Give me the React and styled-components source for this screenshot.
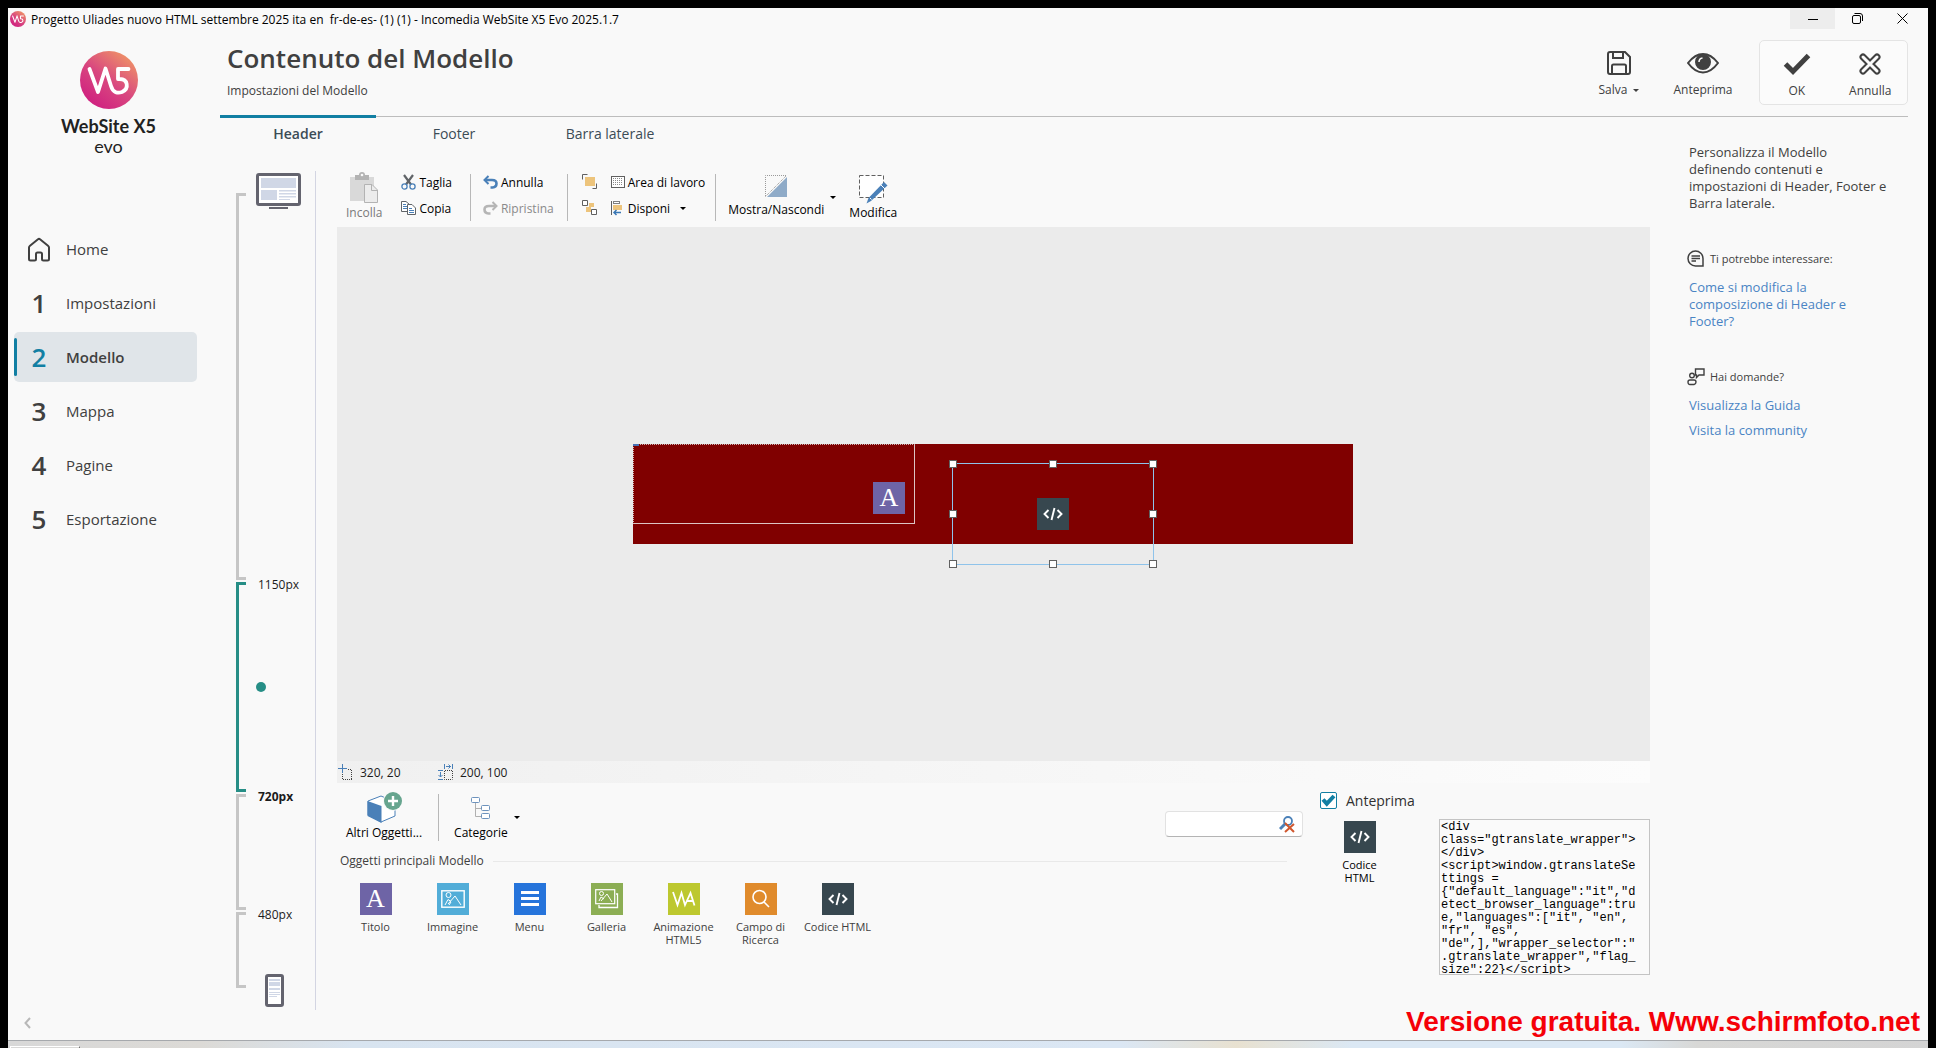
import React from 'react';
import styled, { createGlobalStyle, css } from 'styled-components';

const GlobalStyle = createGlobalStyle`
  *, *::before, *::after {
    box-sizing: border-box;
  }

  body {
    margin: 0;
    background: #000000;
    font-family: 'Open Sans', 'Noto Sans', sans-serif;
    font-size: 12px;
    color: #404040;
  }

  button, input, textarea {
    font: inherit;
    color: inherit;
  }

  button {
    border: 0;
    padding: 0;
    background: none;
    cursor: pointer;
  }

  svg {
    display: block;
    flex: none;
  }
`;

const Page = styled.div`
  min-height: 100vh;
  padding: 8px 8px 0;
  display: flex;
  flex-direction: column;
`;

const Window = styled.div`
  position: relative;
  flex: 1;
  display: flex;
  flex-direction: column;
  background: #f9f9f9;
`;

const TitleBar = styled.div`
  display: flex;
  align-items: center;
  height: 22px;
  padding-left: 2px;
  color: #000000;
`;

const WindowTitle = styled.span`
  flex: 1;
  margin-left: 5px;
  white-space: pre;
`;

const WindowButton = styled.button`
  display: flex;
  align-items: center;
  justify-content: center;
  width: 45px;
  height: 21px;
  background: ${({ $hover }) => ($hover ? '#ededed' : 'transparent')};
`;

const WindowButtons = styled.div`
  display: flex;
  align-self: flex-start;
  padding-right: 3px;
`;

const Body = styled.div`
  flex: 1;
  display: flex;
`;

const Sidebar = styled.aside`
  width: 212px;
  display: flex;
  flex-direction: column;
  padding: 21px 0 10px 6px;
`;

const Logo = styled.div`
  width: 189px;
  height: 173px;
  display: flex;
  flex-direction: column;
  align-items: center;
  color: #222222;
  font-family: Lato, sans-serif;
`;

const LogoName = styled.span`
  margin-top: 6px;
  font-size: 18px;
  line-height: 22px;
  font-weight: 700;
`;

const LogoEdition = styled.span`
  font-size: 18px;
  line-height: 18px;
`;

const Nav = styled.nav`
  display: flex;
  flex-direction: column;
  gap: 4px;
  width: 183px;
`;

const NavItem = styled.button`
  display: flex;
  align-items: center;
  height: 50px;
  border-radius: 5px;
  text-align: left;
  font-size: 15px;
  font-weight: ${({ $active }) => ($active ? 600 : 400)};
  background: ${({ $active }) => ($active ? '#e0e5e9' : 'transparent')};

  &::before {
    content: '';
    width: 3px;
    height: 38px;
    border-radius: 2px;
    background: ${({ $active }) => ($active ? '#127fa3' : 'transparent')};
  }
`;

const NavMark = styled.span`
  display: flex;
  justify-content: center;
  width: 44px;
  margin-right: 5px;
  font-size: 26px;
  font-weight: 600;
  color: ${({ $active }) => ($active ? '#127fa3' : '#404040')};
`;

const Collapse = styled.button`
  margin: auto 0 0 2px;
  width: 24px;
  height: 14px;
`;

const Content = styled.main`
  flex: 1;
  min-width: 0;
  display: flex;
  flex-direction: column;
  padding-right: 20px;
`;

const Header = styled.header`
  display: flex;
  align-items: flex-start;
  height: 87px;
  padding: 10px 0 0 7px;
  border-bottom: 1px solid #bdbdbd;
`;

const Headings = styled.div`
  flex: 1;
`;

const Heading = styled.h1`
  margin: 0;
  font-size: 26px;
  line-height: 36px;
  font-weight: 600;
`;

const SubHeading = styled.p`
  margin: 6px 0 0;
  font-size: 12px;
  line-height: 18px;
`;

const Actions = styled.div`
  display: flex;
  align-items: flex-start;
`;

const ActionGroup = styled.div`
  display: flex;
  width: 149px;
  height: 65px;
  margin-left: 14px;
  border: 1px solid #e4e4e4;
  border-radius: 5px;
  background: #fbfbfb;
`;

const Action = styled.button`
  display: flex;
  flex-direction: column;
  align-items: center;
  gap: 5px;
  flex: ${({ $grow }) => ($grow ? 1 : 'none')};
  width: 84px;
  height: 63px;
  padding-top: 10px;
  line-height: 18px;
`;

const Caption = styled.span`
  display: flex;
  align-items: center;
  gap: ${({ $gap }) => $gap || 6}px;
`;

const Tabs = styled.div`
  display: flex;
  margin-top: -2px;
`;

const Tab = styled.button`
  width: 156px;
  height: 29px;
  padding-top: 5px;
  border-top: 3px solid ${({ $active }) => ($active ? '#127fa3' : 'transparent')};
  font-size: 14px;
  line-height: 20px;
  font-weight: ${({ $active }) => ($active ? 600 : 400)};
  color: #3c4c56;
`;

const Workspace = styled.div`
  flex: 1;
  display: grid;
  grid-template-columns: 96px minmax(0, 1fr) 258px;
`;

const Rail = styled.section`
  display: flex;
  flex-direction: column;
  gap: 2px;
  margin: 27px 0 30px;
  padding: 22px 0 22px 16px;
  border-right: 1px solid #d3d5e2;
`;

const Segment = styled.div`
  flex: ${({ $size }) => $size} 1 0;
  display: flex;
  gap: 12px;

  &::before {
    content: '';
    width: 10px;
    border: 3px solid ${({ $active }) => ($active ? '#268e86' : '#c6c6c6')};
    border-right: 0;
  }
`;

const SegmentLabel = styled.div`
  display: flex;
  flex-direction: column;
  font-size: 12px;
  line-height: 18px;
  font-weight: ${({ $bold }) => ($bold ? 700 : 400)};
  color: #1c1c1c;

  span {
    margin: -6px 0 -12px;
  }
`;

const Marker = styled.i`
  margin: auto 0 auto -2px;
  width: 10px;
  height: 10px;
  border-radius: 5px;
  background: #268e86;
`;

const DesktopSlot = styled.div`
  margin: -20px 0 0 -2px;
`;

const PhoneSlot = styled.div`
  margin: auto 0 -19px 7px;
`;

const Editor = styled.section`
  display: flex;
  flex-direction: column;
  padding: 27px 0 0 21px;
`;

const Toolbar = styled.div`
  display: flex;
  align-items: flex-start;
  height: 56px;
  padding: 1px 0 0 9px;
  color: #000000;
`;

const Divider = styled.div`
  width: 1px;
  height: 47px;
  margin: 2px ${({ $after }) => $after}px 0 ${({ $before }) => $before}px;
  background: #b8b8b8;
`;

const BigButton = styled.button`
  display: flex;
  flex-direction: column;
  align-items: center;
  gap: ${({ $gap }) => $gap || 0}px;
  padding-top: ${({ $top }) => $top || 0}px;
  line-height: 18px;
  white-space: nowrap;

  &:disabled {
    color: #7a7a7a;
  }
`;

const ToolStack = styled.div`
  display: flex;
  flex-direction: column;
  gap: 8px;
  padding-top: 1px;
  margin-left: ${({ $left }) => $left || 0}px;
`;

const ToolButton = styled.button`
  display: flex;
  align-items: center;
  gap: 3px;
  height: 18px;
  white-space: nowrap;

  &:disabled {
    color: #8a8a8a;
  }
`;

const Drop = styled.button`
  padding: 6px;
  margin: 18px ${({ $after }) => $after || 0}px 0 0;
`;

const Triangle = styled.i`
  display: block;
  border: 3px solid transparent;
  border-top-color: ${({ $color }) => $color || '#000000'};
  border-bottom: 0;
`;

const Canvas = styled.div`
  flex: 1;
  display: flex;
  align-items: center;
  justify-content: center;
  padding-right: 1px;
  background: #ebebeb;
`;

const Stage = styled.div`
  position: relative;
  width: 720px;
  height: 100px;
  background: #800000;
`;

const TitleObject = styled.div`
  position: absolute;
  left: 0;
  top: 0;
  width: 282px;
  height: 80px;
  padding: 0 9px 9px 0;
  display: flex;
  align-items: flex-end;
  justify-content: flex-end;
  border: 1px dotted #c9b4b4;
  border-right: 1px solid #dcc4c4;
  border-bottom: 1px solid #dcc4c4;

  &::before {
    content: '';
    position: absolute;
    left: -1px;
    top: -1px;
    width: 6px;
    height: 2px;
    background: #4a72b4;
  }
`;

const SelectedObject = styled.div`
  position: absolute;
  left: 319px;
  top: 19px;
  width: 202px;
  height: 102px;
  display: flex;
  align-items: center;
  justify-content: center;
  border: 1px solid #8fc3ea;
`;

const Handle = styled.i`
  position: absolute;
  left: ${({ $x }) => $x}%;
  top: ${({ $y }) => $y}%;
  width: 8px;
  height: 8px;
  transform: translate(-50%, -50%);
  border: 1px solid #606060;
  background: #ffffff;
`;

const StatusBar = styled.div`
  display: flex;
  align-items: center;
  height: 22px;
  padding-left: 1px;
  color: #1c1c1c;
  background: linear-gradient(to right, #f0f0f0, #fcfcfc);
`;

const StatusItem = styled.span`
  display: flex;
  align-items: center;
  gap: 7px;
  width: 100px;
`;

const BottomPanel = styled.div`
  display: flex;
  height: 257px;
`;

const ObjectsPane = styled.div`
  flex: 1;
  min-width: 0;
`;

const ObjectsBar = styled.div`
  display: flex;
  align-items: flex-start;
  height: 68px;
  padding: 9px 0 0 9px;
  color: #000000;
`;

const SearchBox = styled.div`
  display: flex;
  align-items: center;
  width: 138px;
  height: 26px;
  margin: 19px 16px 0 auto;
  padding-right: 6px;
  border: 1px solid #e2e2e2;
  border-bottom-color: #b4b4b4;
  border-radius: 4px;
  background: #ffffff;
`;

const SearchInput = styled.input`
  flex: 1;
  min-width: 0;
  height: 22px;
  padding: 0 6px;
  border: 0;
  outline: none;
  background: none;
`;

const GroupTitle = styled.h2`
  display: flex;
  align-items: center;
  gap: 9px;
  margin: 0 32px 0 3px;
  font-size: 12px;
  line-height: 20px;
  font-weight: 400;

  &::after {
    content: '';
    flex: 1;
    height: 1px;
    background: #e9e9e9;
  }
`;

const ObjectList = styled.div`
  display: flex;
  padding-top: 12px;
`;

const ObjectButton = styled.button`
  display: flex;
  flex-direction: column;
  align-items: center;
  gap: 5px;
  width: 77px;
  font-size: 11px;
  line-height: 13px;
`;

const Tile = styled.span`
  display: flex;
  align-items: center;
  justify-content: center;
  width: 32px;
  height: 32px;
  background: ${({ $color }) => $color};
  color: #ffffff;
  font-family: 'Liberation Serif', serif;
  font-size: 26px;
  line-height: 32px;
`;

const PreviewPane = styled.div`
  width: 331px;
  padding: 7px 0 0 1px;
`;

const CheckLabel = styled.label`
  display: flex;
  align-items: center;
  gap: 9px;
  height: 20px;
  font-size: 14px;
  color: #303030;
`;

const CheckBox = styled.input`
  appearance: none;
  width: 17px;
  height: 17px;
  margin: 0;
  border: 1px solid #127fa3;
  border-radius: 2px;
  background: #ffffff;

  &:checked {
    background: #ffffff url("data:image/svg+xml,%3Csvg xmlns='http://www.w3.org/2000/svg' viewBox='0 0 15 15'%3E%3Cpath d='M2 6.500l3.800 4.200L13 3' fill='none' stroke='%23127fa3' stroke-width='4'/%3E%3C/svg%3E") center / 15px 15px no-repeat;
  }
`;

const PreviewRow = styled.div`
  display: flex;
  align-items: flex-start;
  justify-content: space-between;
  padding: 9px 0 0 1px;
`;

const PreviewItem = styled.div`
  display: flex;
  flex-direction: column;
  align-items: center;
  gap: 5px;
  width: 77px;
  padding-top: 2px;
  font-size: 11px;
  line-height: 13px;
  text-align: center;
  color: #000000;
`;

const Code = styled.textarea`
  width: 211px;
  height: 156px;
  padding: 1px 9px 0 1px;
  border: 1px solid #c4c4c4;
  background: #fafafa;
  outline: none;
  resize: none;
  overflow: hidden;
  color: #000000;
  font-family: 'Liberation Mono', monospace;
  font-size: 12px;
  line-height: 13px;
`;

const Help = styled.aside`
  padding: 0 20px 0 39px;
  font-size: 13px;
  line-height: 17px;

  p {
    max-width: 200px;
    margin: 0;
  }
`;

const HelpTitle = styled.h3`
  display: flex;
  align-items: center;
  gap: 5px;
  margin: 38px 0 11px -2px;
  font-size: 11px;
  line-height: 18px;
  font-weight: 400;
`;

const HelpLink = styled.a`
  display: block;
  max-width: 180px;
  margin-bottom: 8px;
  color: #4a84c4;
  text-decoration: none;
`;

const Taskbar = styled.div`
  height: 8px;
  border-top: 1px solid #a6a9ad;
  background: linear-gradient(to right, #d8d8d8 0, #dcdad6 10%, #d8e4f0 18%, #dbe7f4 58%, #e8e1d0 64%, #dbe8f4 70%, #dbe8f4 84%, #d8d8d6 88%, #d4d4d4 100%);
`;

const TaskbarTab = styled.div`
  width: 70px;
  height: 2px;
  margin: 5px 0 0 2px;
  border: 1px solid #ffffff;
  border-right-color: #707070;
  border-bottom: 0;
`;

const Watermark = styled.div`
  position: absolute;
  right: 8px;
  bottom: 10px;
  font-family: 'Liberation Sans', Arial, sans-serif;
  font-size: 28px;
  line-height: 32px;
  font-weight: 700;
  white-space: nowrap;
  color: #f50008;
`;

const line = css`
  fill: none;
  stroke: currentColor;
`;

const LineIcon = styled.svg`
  ${line}
`;

const Monogram = ({ size, id }) => (
  <svg width={size} height={size} viewBox="0 0 58 58">
    <defs>
      <linearGradient id={id} x1="0.2" y1="0.95" x2="0.85" y2="0.1">
        <stop offset="0" stopColor="#cf1f80" />
        <stop offset="0.5" stopColor="#d9487f" />
        <stop offset="1" stopColor="#ee9068" />
      </linearGradient>
    </defs>
    <circle cx="29" cy="29" r="29" fill={`url(#${id})`} />
    <path
      d="M9.500 18L18 41L25.500 17.500L31 35C33 42 38 42.500 42 41C49.500 37.500 48 27.500 39 28L38 28V18H48.500"
      fill="none"
      stroke="#ffffff"
      strokeWidth="3.800"
      strokeLinecap="round"
      strokeLinejoin="round"
    />
  </svg>
);

const HomeIcon = () => (
  <LineIcon width="24" height="25" viewBox="0 0 24 25" strokeWidth="2" strokeLinejoin="round">
    <path d="M2 10.500Q2 9.500 3 8.700L11 2.300Q12 1.500 13 2.300L21 8.700Q22 9.500 22 10.500V22Q22 23.500 20.500 23.500H16.500Q15 23.500 15 22V17Q15 15.500 13.500 15.500H10.500Q9 15.500 9 17V22Q9 23.500 7.500 23.500H3.500Q2 23.500 2 22Z" />
  </LineIcon>
);

const SaveIcon = () => (
  <LineIcon width="26" height="26" viewBox="0 0 26 26" strokeWidth="2">
    <path d="M4 2H19L24 7V22Q24 24 22 24H4Q2 24 2 22V4Q2 2 4 2ZM7 2V8H17V2M6 24V16Q6 14.500 7.500 14.500H18.500Q20 14.500 20 16V24" />
  </LineIcon>
);

const EyeIcon = () => (
  <LineIcon width="32" height="26" viewBox="0 0 32 26" strokeWidth="2">
    <path d="M1 13Q8 4 16 4T31 13Q24 22.500 16 22.500T1 13Z" />
    <circle cx="16" cy="12" r="7" fill="currentColor" />
    <path d="M12 12Q12 8.500 15.500 8" stroke="#fafafa" strokeWidth="1.500" />
  </LineIcon>
);

const CheckIcon = () => (
  <LineIcon width="28" height="26" viewBox="0 0 28 26" strokeWidth="5">
    <path d="M2.500 13L10 20.500L25.500 4.500" />
  </LineIcon>
);

const CrossIcon = () => (
  <LineIcon width="24" height="26" viewBox="0 0 24 26" strokeLinecap="round">
    <path d="M5 6L19 20M19 6L5 20" strokeWidth="7" />
    <path d="M5 6L19 20M19 6L5 20" stroke="#fbfbfb" strokeWidth="3" />
  </LineIcon>
);

const DesktopIcon = () => (
  <svg width="45" height="37" viewBox="0 0 45 37">
    <rect x="1.500" y="1.500" width="42" height="30" rx="1.500" fill="#ffffff" stroke="#64646f" strokeWidth="3" />
    <path d="M5 5H40V15H5ZM5 17H21V27H5ZM23 17H40V18.500H23ZM23 20H40V21.500H23ZM23 23H40V24.500H23ZM23 26H34V27H23Z" fill="#d0d7e6" />
    <path d="M13 35H32" stroke="#64646f" strokeWidth="2" />
  </svg>
);

const PhoneIcon = () => (
  <svg width="19" height="33" viewBox="0 0 19 33">
    <rect x="1.500" y="1.500" width="16" height="30" rx="1.500" fill="#ffffff" stroke="#64646f" strokeWidth="3" />
    <path d="M4 5H15V7H4ZM4 8H15V12H4ZM4 14H15V16H4ZM4 18H15V19H4ZM4 20H15V21H4ZM4 22H12V23H4Z" fill="#d0d7e6" />
  </svg>
);

const PasteIcon = () => (
  <svg width="29" height="31" viewBox="0 0 29 31">
    <path d="M0 5H24V29H0Z" fill="#d9d9d9" />
    <path d="M5 3H9Q9 0 12 0T15 3H19V8H5Z" fill="#b3b3b3" />
    <circle cx="12" cy="3" r="1.300" fill="#f9f9f9" />
    <path d="M14.500 12.500H22L27.500 18V30.500H14.500Z" fill="#ececec" stroke="#b3b3b3" />
    <path d="M21.500 12.500V18.500H27.500" fill="none" stroke="#b3b3b3" />
  </svg>
);

const ScissorsIcon = () => (
  <svg width="15" height="16" viewBox="0 0 15 16" fill="none">
    <path d="M3 1L10 10.500M12 1L5 10.500" stroke="#606468" strokeWidth="2.200" />
    <circle cx="3.500" cy="12.500" r="2.600" stroke="#4a80b8" strokeWidth="1.300" />
    <circle cx="11.500" cy="12.500" r="2.600" stroke="#4a80b8" strokeWidth="1.300" />
  </svg>
);

const CopyIcon = () => (
  <svg width="15" height="16" viewBox="0 0 15 16" fill="#ffffff" stroke="#606468">
    <path d="M0.500 1.500H5L8.500 4.500V11.500H0.500Z" />
    <path d="M2 4.500H5M2 6.500H6M2 8.500H6" stroke="#4a80b8" />
    <path d="M6.500 4.500H11L14.500 8V14.500H6.500Z" />
    <path d="M8 8.500H11M8 10.500H13M8 12.500H13" stroke="#4a80b8" />
  </svg>
);

const UndoIcon = ({ flip, color }) => (
  <svg width="15" height="14" viewBox="0 0 15 14" fill="none" stroke={color} strokeWidth="2">
    <g transform={flip ? 'translate(15 0) scale(-1 1)' : undefined}>
      <path d="M5.500 1L1.500 5L5.500 9" />
      <path d="M2 5H9Q13.500 5 13.500 8.500T9.500 12.500H7.500" strokeWidth="2.600" />
    </g>
  </svg>
);

const FrontIcon = () => (
  <svg width="16" height="16" viewBox="0 0 16 16" fill="none" stroke="#606060">
    <path d="M5.500 0.500H0.500V5.500M10.500 14.500H14.500V9.500" />
    <rect x="3" y="3" width="10" height="9" fill="#edc47c" stroke="none" />
  </svg>
);

const BackIcon = () => (
  <svg width="16" height="16" viewBox="0 0 16 16" stroke="#606060">
    <path d="M7 3H12V7H7ZM4 7H9V12H4Z" fill="#edc47c" stroke="none" />
    <path d="M0.500 0.500H5.500V5.500H0.500ZM9.500 9.500H14.500V14.500H9.500Z" fill="#ffffff" />
  </svg>
);

const GridIcon = () => (
  <svg width="14" height="12" viewBox="0 0 14 12">
    <rect x="0.500" y="0.500" width="13" height="11" fill="#ffffff" stroke="#606060" />
    <path d="M2 2.500H12M2 4.500H12M2 6.500H12M2 8.500H12" stroke="#8a8a8a" strokeDasharray="1 1" />
  </svg>
);

const ArrangeIcon = () => (
  <svg width="14" height="16" viewBox="0 0 14 16" fill="none">
    <path d="M0.500 1V15" stroke="#606060" />
    <rect x="2.500" y="1.500" width="6" height="2" fill="#ffffff" stroke="#808080" />
    <rect x="2" y="5" width="9" height="5" fill="#edc47c" />
    <path d="M10 12.500H3M5.500 10L3 12.500L5.500 15" stroke="#3b78b5" strokeWidth="1.500" />
  </svg>
);

const ShowHideIcon = () => (
  <svg width="24" height="24" viewBox="0 0 24 24">
    <path d="M1.500 22V1.500H22" fill="none" stroke="#9a9a9a" strokeDasharray="1 1" />
    <path d="M1.500 22.500L22.500 1.500" stroke="#909090" strokeDasharray="1 1" />
    <path d="M23 3V23H3Z" fill="#8fabc8" />
  </svg>
);

const EditIcon = () => (
  <svg width="30" height="30" viewBox="0 0 30 30">
    <rect x="1.500" y="1.500" width="24" height="22" fill="#ffffff" stroke="#606060" strokeDasharray="4 2" />
    <path d="M26 8L29.500 11.500L13 27L8.500 29.500L10.500 24Z" fill="#4a80b8" />
    <path d="M23 11L27 15M12 24L13.500 25.500" stroke="#ffffff" />
  </svg>
);

const PositionIcon = () => (
  <svg width="15" height="16" viewBox="0 0 15 16" fill="none">
    <path d="M0 4.500H9M4.500 0V9" stroke="#4a80b8" />
    <path d="M4.500 10V15.500H14M13.500 15V5.500H9" stroke="#404040" strokeDasharray="1 1" />
  </svg>
);

const SizeIcon = () => (
  <svg width="15" height="16" viewBox="0 0 15 16" fill="none">
    <path d="M8 2.500H13M10.500 0.500L12.500 2.500L10.500 4.500M6.500 0V5M14.500 0V5" stroke="#4a80b8" />
    <path d="M2.500 8V13M0.500 11L2.500 13L4.500 11M0 6.500H5M0 15.500H5" stroke="#4a80b8" />
    <path d="M7 6.500H14.500V15.500M6.500 7V15.500H14" stroke="#404040" strokeDasharray="1 1" />
  </svg>
);

const BoxPlusIcon = () => (
  <svg width="36" height="32" viewBox="0 0 36 32">
    <path d="M2 9L15 4L29 10V24L15 30L2 23Z" fill="#ffffff" stroke="#4a80b8" />
    <path d="M1.500 9L15.500 14V31L1.500 24Z" fill="#4a80b8" />
    <circle cx="27" cy="9" r="10" fill="#f9f9f9" />
    <circle cx="27" cy="9" r="9" fill="#67a58f" />
    <path d="M27 4V14M22 9H32" stroke="#ffffff" strokeWidth="2.400" />
  </svg>
);

const TreeIcon = () => (
  <svg width="20" height="23" viewBox="0 0 20 23" fill="#ffffff" stroke="#6d93bd">
    <path d="M4.500 6V19.500H11M4.500 11.500H11" fill="none" stroke="#b0b0b0" />
    <rect x="0.500" y="0.500" width="8" height="5" rx="1" />
    <rect x="10.500" y="8.500" width="8" height="5" rx="1" />
    <rect x="10.500" y="16.500" width="8" height="5" rx="1" />
  </svg>
);

const ClearSearchIcon = () => (
  <svg width="17" height="17" viewBox="0 0 17 17" fill="none">
    <circle cx="9" cy="5" r="4" stroke="#4a80b8" strokeWidth="1.800" />
    <path d="M6 8L1 13" stroke="#4a80b8" strokeWidth="3" />
    <path d="M6 7L15 16M15 8L6 16" stroke="#d0572e" strokeWidth="2" />
  </svg>
);

const PictureIcon = () => (
  <LineIcon width="24" height="18" viewBox="0 0 24 18">
    <rect x="0.800" y="0.800" width="22.400" height="16.400" strokeWidth="1.400" />
    <circle cx="7.500" cy="5" r="2.500" />
    <path d="M4 15L7 9.500L10 11.500M7 14L14 6L20 15M8 15L10 12" />
  </LineIcon>
);

const MenuIcon = () => (
  <LineIcon width="20" height="18" viewBox="0 0 20 18" strokeWidth="3">
    <path d="M1 2.500H19M1 8.500H19M1 14.500H19" />
  </LineIcon>
);

const GalleryIcon = () => (
  <LineIcon width="24" height="20" viewBox="0 0 24 20">
    <rect x="0.700" y="0.700" width="19" height="14" strokeWidth="1.200" />
    <circle cx="6.500" cy="4.500" r="2" />
    <path d="M4 12L6 8L9 10M6 12L12 5L17 13" />
    <path d="M4 16V18.500H22.500V5H21" strokeWidth="1.300" />
  </LineIcon>
);

const AnimationIcon = () => (
  <LineIcon width="24" height="18" viewBox="0 0 24 18" strokeWidth="1.800">
    <path d="M1 2L5.500 15L9.500 3L13 15L18.500 3L22.500 15.500M15 11H21" />
  </LineIcon>
);

const SearchIcon = () => (
  <LineIcon width="20" height="20" viewBox="0 0 20 20" strokeWidth="1.600">
    <circle cx="8.500" cy="8" r="6.500" />
    <path d="M13 13L18 18" />
  </LineIcon>
);

const CodeIcon = () => (
  <LineIcon width="20" height="14" viewBox="0 0 20 14" strokeWidth="1.900">
    <path d="M5.500 3L1.500 7L5.500 11M14.500 3L18.500 7L14.500 11M11.500 1L8.500 13" />
  </LineIcon>
);

const BubbleIcon = () => (
  <LineIcon width="18" height="18" viewBox="0 0 18 18" strokeWidth="1.500">
    <path d="M16 8.500A7.500 7.500 0 1 0 8.500 16H16ZM4.500 6H13M4.500 8.500H13M4.500 11H9" />
  </LineIcon>
);

const AskIcon = () => (
  <LineIcon width="18" height="18" viewBox="0 0 18 18" strokeWidth="1.400">
    <path d="M8.500 1H17V7H12L9.500 9.500V7H8.500Z" />
    <circle cx="5" cy="7.500" r="2.300" />
    <path d="M1 14Q1 12 3 12H7Q9 12 9 14T7 16.500H3Q1 16.500 1 14Z" />
  </LineIcon>
);

const NAV_ITEMS = [
  { mark: <HomeIcon />, label: 'Home' },
  { mark: '1', label: 'Impostazioni' },
  { mark: '2', label: 'Modello', active: true },
  { mark: '3', label: 'Mappa' },
  { mark: '4', label: 'Pagine' },
  { mark: '5', label: 'Esportazione' },
];

const TABS = ['Header', 'Footer', 'Barra laterale'];

const OBJECTS = [
  { label: 'Titolo', color: '#6e64a6', icon: 'A' },
  { label: 'Immagine', color: '#52add8', icon: <PictureIcon /> },
  { label: 'Menu', color: '#2674db', icon: <MenuIcon /> },
  { label: 'Galleria', color: '#8cae54', icon: <GalleryIcon /> },
  { label: 'Animazione HTML5', color: '#bdc82f', icon: <AnimationIcon /> },
  { label: 'Campo di Ricerca', color: '#e08b2c', icon: <SearchIcon /> },
  { label: 'Codice HTML', color: '#37474f', icon: <CodeIcon /> },
];

const HANDLES = [[0, 0], [50, 0], [100, 0], [0, 50], [100, 50], [0, 100], [50, 100], [100, 100]];

const SNIPPET = `<div
class="gtranslate_wrapper">
</div>
<script>window.gtranslateSettings = {"default_language":"it","detect_browser_language":true,"languages":["it", "en", "fr", "es", "de",],"wrapper_selector":".gtranslate_wrapper","flag_size":22}</script>`;

const AppTitleBar = () => (
  <TitleBar>
    <Monogram size={16} id="badge" />
    <WindowTitle>
      {'Progetto Uliades nuovo HTML settembre 2025 ita en  fr-de-es- (1) (1) - Incomedia WebSite X5 Evo 2025.1.7'}
    </WindowTitle>
    <WindowButtons>
      <WindowButton $hover aria-label="Riduci">
        <svg width="10" height="10"><path d="M0 5.500H10" stroke="#000000" /></svg>
      </WindowButton>
      <WindowButton aria-label="Ripristina finestra">
        <svg width="11" height="11" fill="none" stroke="#000000">
          <rect x="0.500" y="2.500" width="8" height="8" rx="1.500" />
          <path d="M2.500 0.500H8Q10.500 0.500 10.500 3V8" />
        </svg>
      </WindowButton>
      <WindowButton aria-label="Chiudi">
        <svg width="11" height="11" stroke="#000000"><path d="M0.500 0.500L10.500 10.500M10.500 0.500L0.500 10.500" /></svg>
      </WindowButton>
    </WindowButtons>
  </TitleBar>
);

const AppSidebar = () => (
  <Sidebar>
    <Logo>
      <Monogram size={58} id="logo" />
      <LogoName>WebSite X5</LogoName>
      <LogoEdition>evo</LogoEdition>
    </Logo>
    <Nav>
      {NAV_ITEMS.map(({ mark, label, active }) => (
        <NavItem key={label} $active={active}>
          <NavMark $active={active}>{mark}</NavMark>
          {label}
        </NavItem>
      ))}
    </Nav>
    <Collapse aria-label="Comprimi">
      <svg width="24" height="14" fill="none" stroke="#b8b8b8" strokeWidth="2">
        <path d="M14 2L9.500 7L14 12" />
      </svg>
    </Collapse>
  </Sidebar>
);

const PageHeader = () => (
  <Header>
    <Headings>
      <Heading>Contenuto del Modello</Heading>
      <SubHeading>Impostazioni del Modello</SubHeading>
    </Headings>
    <Actions>
      <Action>
        <SaveIcon />
        <Caption>Salva <Triangle $color="#404040" /></Caption>
      </Action>
      <Action>
        <EyeIcon />
        Anteprima
      </Action>
      <ActionGroup>
        <Action $grow>
          <CheckIcon />
          OK
        </Action>
        <Action $grow>
          <CrossIcon />
          Annulla
        </Action>
      </ActionGroup>
    </Actions>
  </Header>
);

const Breakpoints = () => (
  <Rail>
    <Segment $size={387}>
      <DesktopSlot><DesktopIcon /></DesktopSlot>
    </Segment>
    <Segment $size={210} $active>
      <SegmentLabel>
        <span>1150px</span>
        <Marker />
      </SegmentLabel>
    </Segment>
    <Segment $size={116}>
      <SegmentLabel $bold><span>720px</span></SegmentLabel>
    </Segment>
    <Segment $size={76}>
      <SegmentLabel><span>480px</span><PhoneSlot><PhoneIcon /></PhoneSlot></SegmentLabel>
    </Segment>
  </Rail>
);

const EditorToolbar = () => (
  <Toolbar>
    <BigButton disabled $gap={1}>
      <PasteIcon />
      Incolla
    </BigButton>
    <ToolStack $left={19}>
      <ToolButton><ScissorsIcon />Taglia</ToolButton>
      <ToolButton><CopyIcon />Copia</ToolButton>
    </ToolStack>
    <Divider $before={18} $after={12} />
    <ToolStack>
      <ToolButton><UndoIcon color="#4a80b8" />Annulla</ToolButton>
      <ToolButton disabled><UndoIcon color="#b5b5b5" flip />Ripristina</ToolButton>
    </ToolStack>
    <Divider $before={13} $after={14} />
    <ToolStack>
      <ToolButton aria-label="Porta in primo piano"><FrontIcon /></ToolButton>
      <ToolButton aria-label="Porta in secondo piano"><BackIcon /></ToolButton>
    </ToolStack>
    <ToolStack $left={13}>
      <ToolButton><GridIcon />Area di lavoro</ToolButton>
      <ToolButton>
        <ArrangeIcon />
        <Caption $gap={10}>Disponi <Triangle /></Caption>
      </ToolButton>
    </ToolStack>
    <Divider $before={10} $after={12} />
    <BigButton $top={2} $gap={3}>
      <ShowHideIcon />
      Mostra/Nascondi
    </BigButton>
    <Drop $after={7} aria-label="Opzioni di visualizzazione"><Triangle /></Drop>
    <BigButton $top={2}>
      <EditIcon />
      Modifica
    </BigButton>
  </Toolbar>
);

const EditorCanvas = () => (
  <Canvas>
    <Stage>
      <TitleObject>
        <Tile $color="#6e64a6">A</Tile>
      </TitleObject>
      <SelectedObject>
        <Tile $color="#37474f"><CodeIcon /></Tile>
        {HANDLES.map(([x, y]) => <Handle key={`${x}-${y}`} $x={x} $y={y} />)}
      </SelectedObject>
    </Stage>
  </Canvas>
);

const Objects = () => (
  <ObjectsPane>
    <ObjectsBar>
      <BigButton>
        <BoxPlusIcon />
        Altri Oggetti...
      </BigButton>
      <Divider $before={16} $after={15} />
      <BigButton $top={5} $gap={4}>
        <TreeIcon />
        Categorie
      </BigButton>
      <Drop aria-label="Scegli categoria"><Triangle /></Drop>
      <SearchBox>
        <SearchInput type="text" aria-label="Cerca oggetto" />
        <ClearSearchIcon />
      </SearchBox>
    </ObjectsBar>
    <GroupTitle>Oggetti principali Modello</GroupTitle>
    <ObjectList>
      {OBJECTS.map(({ label, color, icon }) => (
        <ObjectButton key={label}>
          <Tile $color={color}>{icon}</Tile>
          {label}
        </ObjectButton>
      ))}
    </ObjectList>
  </ObjectsPane>
);

const Preview = () => (
  <PreviewPane>
    <CheckLabel>
      <CheckBox type="checkbox" defaultChecked />
      Anteprima
    </CheckLabel>
    <PreviewRow>
      <PreviewItem>
        <Tile $color="#37474f"><CodeIcon /></Tile>
        <span>Codice<br />HTML</span>
      </PreviewItem>
      <Code readOnly aria-label="Codice HTML" value={SNIPPET} />
    </PreviewRow>
  </PreviewPane>
);

const HelpPanel = () => (
  <Help>
    <p>Personalizza il Modello definendo contenuti e impostazioni di Header, Footer e Barra laterale.</p>
    <HelpTitle><BubbleIcon />Ti potrebbe interessare:</HelpTitle>
    <HelpLink href="#header">Come si modifica la composizione di Header e Footer?</HelpLink>
    <HelpTitle><AskIcon />Hai domande?</HelpTitle>
    <HelpLink href="#guida">Visualizza la Guida</HelpLink>
    <HelpLink href="#community">Visita la community</HelpLink>
  </Help>
);

const App = () => (
  <Page>
    <GlobalStyle />
    <Window>
      <AppTitleBar />
      <Body>
        <AppSidebar />
        <Content>
          <PageHeader />
          <Tabs>
            {TABS.map((tab, index) => <Tab key={tab} $active={index === 0}>{tab}</Tab>)}
          </Tabs>
          <Workspace>
            <Breakpoints />
            <Editor>
              <EditorToolbar />
              <EditorCanvas />
              <StatusBar>
                <StatusItem><PositionIcon />320, 20</StatusItem>
                <StatusItem><SizeIcon />200, 100</StatusItem>
              </StatusBar>
              <BottomPanel>
                <Objects />
                <Preview />
              </BottomPanel>
            </Editor>
            <HelpPanel />
          </Workspace>
        </Content>
      </Body>
      <Taskbar><TaskbarTab /></Taskbar>
      <Watermark>Versione gratuita. Www.schirmfoto.net</Watermark>
    </Window>
  </Page>
);

export default App;
